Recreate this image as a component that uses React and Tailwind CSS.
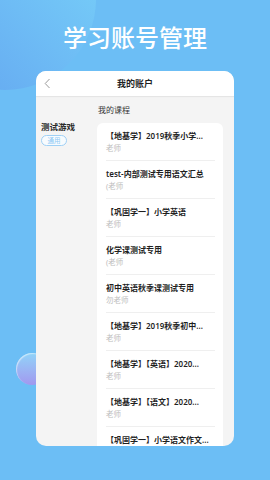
import React from "react";

const courses = [
  { t: "【地基学】2019秋季小学...", s: "老师" },
  { t: "test-内部测试专用语文汇总", s: "(老师" },
  { t: "【巩固学一】小学英语", s: "老师" },
  { t: "化学课测试专用", s: "(老师" },
  { t: "初中英语秋季课测试专用", s: "勿老师" },
  { t: "【地基学】2019秋季初中...", s: "老师" },
  { t: "【地基学】【英语】2020...", s: "老师" },
  { t: "【地基学】【语文】2020...", s: "老师" },
  { t: "【巩固学一】小学语文作文...", s: "" },
];

export default function App() {
  return (
    <div
      className="relative w-[270px] h-[480px] overflow-hidden bg-[#6cbef5]"
      style={{ fontFamily: '"Noto Sans", "Noto Sans CJK SC", sans-serif' }}
    >
      {/* decorative circles */}
      <div className="absolute left-[-86px] top-[-92px] w-[182px] h-[182px] rounded-full bg-gradient-to-bl from-[#7ad5f9] via-[#6ebcf5] to-[#62a2ef]" />
      <div className="absolute left-[16px] top-[353px] w-[32px] h-[32px] rounded-full bg-gradient-to-b from-[#8fd3f8] to-[#a198ef] shadow-[inset_1px_1px_1px_rgba(255,255,255,0.5)]" />

      <div className="relative flex flex-col items-center">
        <div className="pt-[26px] h-[71px] text-white text-[24px] leading-[24px] font-medium">
          学习账号管理
        </div>

        <div className="w-[198px] h-[375px] rounded-[10px] bg-[#f4f4f4] overflow-hidden flex flex-col">
          <div className="h-[25px] bg-white flex items-center shadow-[0_1px_1px_rgba(0,0,0,0.06)] relative z-10">
            <div className="w-[40px] pl-[8px] flex items-center">
              <svg width="7" height="11" viewBox="0 0 7 11" fill="none">
                <path d="M5.5 1 L1.2 5.5 L5.5 10" stroke="#9a9a9a" strokeWidth="1" />
              </svg>
            </div>
            <div className="flex-1 text-center text-[9px] leading-[10px] text-[#1f1f1f] font-semibold">我的账户</div>
            <div className="w-[40px]" />
          </div>

          <div className="flex flex-1 min-h-0">
            <div className="w-[61px] pl-[5px] pt-[26px] flex flex-col items-start">
              <div className="text-[8.5px] leading-[10px] text-[#2a2a2a] font-semibold">测试游戏</div>
              <div className="mt-[3px] w-[26px] h-[11px] rounded-full border border-[#9fd0f5] bg-[#f7fbfe] flex items-center justify-center text-[6.5px] leading-[7px] text-[#8ec8f4]">
                通用
              </div>
            </div>

            <div className="flex-1 pr-[11px] flex flex-col min-w-0">
              <div className="pt-[9px] pl-[1px] text-[8px] leading-[10px] text-[#333]">我的课程</div>
              <div className="mt-[8px] flex-1 bg-white rounded-t-[6px] pl-[9px] overflow-hidden">
                {courses.map((c, i) => (
                  <div key={i} className="h-[38px] mr-[8px] border-b border-[#efefef] pt-[6px]">
                    <div className="text-[8px] leading-[13px] text-[#1f1f1f] font-semibold whitespace-nowrap">{c.t}</div>
                    {c.s && (
                      <div className="text-[7.5px] leading-[12px] text-[#bdbdbd] whitespace-nowrap">{c.s}</div>
                    )}
                  </div>
                ))}
              </div>
            </div>
          </div>
        </div>
      </div>
    </div>
  );
}
